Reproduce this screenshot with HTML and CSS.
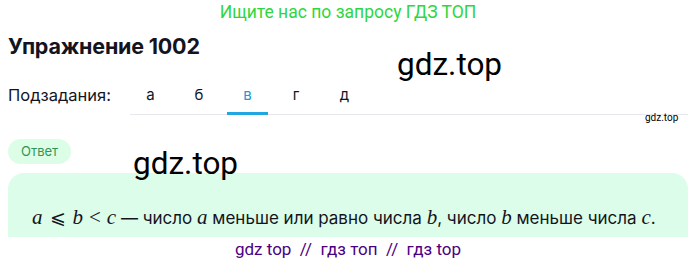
FILE: index.html
```html
<!DOCTYPE html>
<html>
    <head>
        <title>Упражнение 1002</title>
        <link rel="stylesheet" href="styles.css">
    </head>
    <body>
        <div class="page">
            <div class="promo">Ищите нас по запросу ГДЗ ТОП</div>
            <h1 class="title">Упражнение 1002</h1>
            <div class="subtasks">
                <span class="subtasksLabel">Подзадания:</span>
                <div class="tabs">
                    <span class="tab">а</span>
                    <span class="tab">б</span>
                    <span class="tab active">в</span>
                    <span class="tab">г</span>
                    <span class="tab">д</span>
                </div>
            </div>
            <div class="answerLabel">Ответ</div>
            <div class="answerBox">
                <p class="answerText"><span class="math"><i>a</i><span class="rel">⩽</span><i>b</i><span class="op">&lt;</span><i>c</i></span> — число <span class="math"><i>a</i></span> меньше или равно числа <span class="math"><i>b</i></span>, число <span class="math"><i>b</i></span> меньше числа <span class="math"><i>c</i></span>.</p>
            </div>
            <div class="footerLinks">gdz top &nbsp;//&nbsp; гдз топ &nbsp;//&nbsp; гдз top</div>

            <!-- watermarks over the content -->
            <span class="mark markBig1">gdz.top</span>
            <span class="mark markSmall">gdz.top</span>
            <span class="mark markBig2">gdz.top</span>
        </div>
    </body>
</html>
```

FILE: styles.css
```css
/* Basic page layout */
body {
    margin: 0;
    background-color: rgb(255, 255, 255);
    font-family: 'Inter', 'Noto Sans', sans-serif;
    color: rgb(20, 20, 30);
}

.page {
    position: relative;
    padding: 0 7px 0 8px;
}

.promo {
    text-align: center;
    font-family: 'Roboto', 'Liberation Sans', sans-serif;
    font-size: 17.5px;
    color: rgb(46, 214, 64);
    height: 24px;
    line-height: 24px;
}

.title {
    margin: 8px 0 0 0;
    font-size: 21.5px;
    font-weight: 700;
    line-height: 28px;
    letter-spacing: -0.2px;
}

.subtasks {
    display: flex;
    align-items: flex-end;
    margin-top: 25px;
}

.subtasksLabel {
    font-size: 16.5px;
    width: 122px;
    line-height: 20px;
    padding-bottom: 10px;
}

.tabs {
    display: flex;
    flex: 1;
    gap: 7.5px;
    border-bottom: 1px solid rgb(232, 232, 236);
}

.tab {
    width: 41px;
    text-align: center;
    font-size: 15px;
    line-height: 20px;
    padding-bottom: 7px;
    margin-bottom: -1px;
    border-bottom: 3px solid transparent;
}

.tab.active {
    color: rgb(38, 150, 214);
    border-bottom-color: rgb(34, 166, 226);
}

.answerLabel {
    display: inline-block;
    margin-top: 24px;
    padding: 0 13px;
    height: 25px;
    line-height: 25px;
    border-radius: 13px;
    background-color: rgb(220, 253, 230);
    color: rgb(46, 150, 90);
    font-size: 13px;
}

.answerBox {
    margin-top: 9px;
    background-color: rgb(220, 253, 233);
    border-radius: 16px 16px 0 0;
    height: 64px;
    padding: 0 16px 0 24px;
    display: flex;
    align-items: flex-end;
}

.answerText {
    margin: 0 0 7px 0;
    font-size: 17px;
    line-height: 24px;
    white-space: nowrap;
}

.math {
    font-family: 'Liberation Serif', 'DejaVu Serif', serif;
    font-size: 21px;
}

.math i {
    font-style: italic;
}

.rel {
    font-family: 'DejaVu Serif', serif;
    font-size: 19px;
    margin: 0 7px;
}

.op {
    margin: 0 6px;
}

.footerLinks {
    text-align: center;
    font-family: 'Roboto', 'Liberation Sans', sans-serif;
    font-size: 17px;
    color: rgb(75, 0, 130);
    margin-top: 1px;
    line-height: 22px;
}

.mark {
    position: absolute;
    font-family: 'Roboto', 'Liberation Sans', sans-serif;
    color: rgb(0, 0, 0);
    white-space: nowrap;
}

.markBig1 {
    left: 397px;
    top: 46px;
    font-size: 31.5px;
}

.markBig2 {
    left: 133px;
    top: 145px;
    font-size: 31.5px;
}

.markSmall {
    left: 645px;
    top: 112px;
    font-size: 10px;
}
```
